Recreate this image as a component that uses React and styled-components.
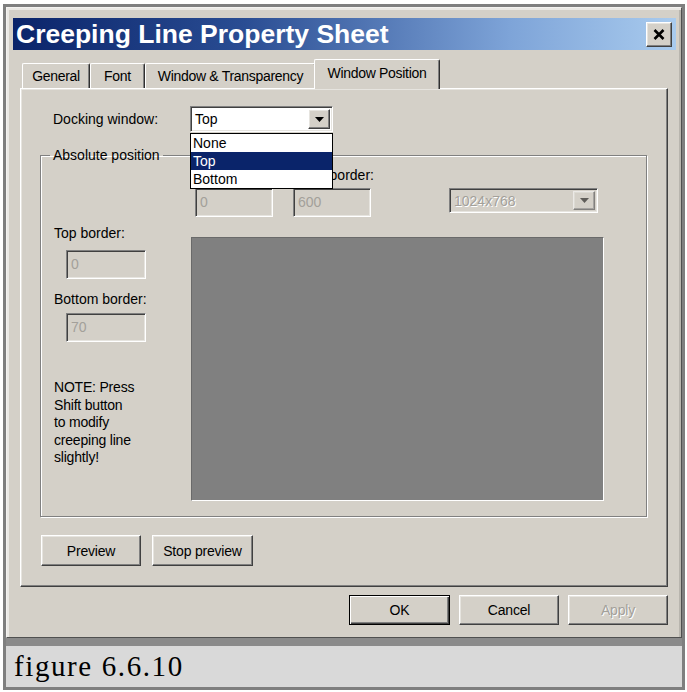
import React from "react";
import styled, { createGlobalStyle } from "styled-components";

const GlobalStyle = createGlobalStyle`
  html, body { margin: 0; padding: 0; background: #ffffff; }
  body { font-family: "Liberation Sans", Arial, sans-serif; color: #000; }
`;

const raised = `
  border-top: 1px solid #ffffff;
  border-left: 1px solid #ffffff;
  border-right: 1px solid #404040;
  border-bottom: 1px solid #404040;
  box-shadow: inset -1px -1px 0 #808080, inset 1px 1px 0 #e6e4df;
`;

const sunken = `
  border-top: 1px solid #808080;
  border-left: 1px solid #808080;
  border-right: 1px solid #ffffff;
  border-bottom: 1px solid #ffffff;
  box-shadow: inset 1px 1px 0 #404040, inset -1px -1px 0 #e6e4df;
`;

const tabs = [
  { label: "General", width: 68 },
  { label: "Font", width: 55 },
  { label: "Window & Transparency", width: 171 },
  { label: "Window Position", width: 126, active: true },
];

const dockOptions = ["None", "Top", "Bottom"];

const noteLines = ["NOTE: Press", "Shift button", "to modify", "creeping line", "slightly!"];

const Arrow = () => (
  <svg width="9" height="5" viewBox="0 0 9 5">
    <path d="M0 0h9L4.5 5z" fill="#000" />
  </svg>
);

const App = () => {
  return (
    <React.Fragment>
      <GlobalStyle />
      <S.frame>
        <S.dialog>
          <S.titleBar>
            <S.titleText>Creeping Line Property Sheet</S.titleText>
            <S.closeButton>
              <svg width="12" height="11" viewBox="0 0 12 11">
                <path d="M1.5 1l9 9M10.5 1l-9 9" stroke="#000" strokeWidth="2.6" />
              </svg>
            </S.closeButton>
          </S.titleBar>

          <S.tabStrip>
            {tabs.map((t) => (
              <S.tab key={t.label} $width={t.width} $active={t.active}>
                {t.label}
              </S.tab>
            ))}
          </S.tabStrip>

          <S.panel>
            <S.dockRow>
              <S.dockLabel>Docking window:</S.dockLabel>
              <S.selectWrap>
                <S.select $width={143}>
                  <S.selectValue>Top</S.selectValue>
                  <S.arrowButton>
                    <Arrow />
                  </S.arrowButton>
                </S.select>
                <S.dropList>
                  {dockOptions.map((o) => (
                    <S.dropItem key={o} $selected={o === "Top"}>
                      {o}
                    </S.dropItem>
                  ))}
                </S.dropList>
              </S.selectWrap>
            </S.dockRow>

            <S.group>
              <S.legend>Absolute position</S.legend>
              <S.groupGrid>
                <div />
                <S.topFields>
                  <S.field $width={78}>
                    <S.label>Left border:</S.label>
                    <S.input $width={78}>0</S.input>
                  </S.field>
                  <S.field $width={78}>
                    <S.label>Right border:</S.label>
                    <S.input $width={78}>600</S.input>
                  </S.field>
                  <S.resSelect $width={149}>
                    <S.selectValue $disabled>1024x768</S.selectValue>
                    <S.arrowButton $disabled>
                      <Arrow />
                    </S.arrowButton>
                  </S.resSelect>
                </S.topFields>

                <S.leftStack>
                  <S.label>Top border:</S.label>
                  <S.stackInput $width={80}>0</S.stackInput>
                  <S.label $gap={12}>Bottom border:</S.label>
                  <S.stackInput $width={80} $gap={6}>70</S.stackInput>
                  <S.note>
                    {noteLines.map((l) => (
                      <div key={l}>{l}</div>
                    ))}
                  </S.note>
                </S.leftStack>
                <S.preview />
              </S.groupGrid>
            </S.group>

            <S.buttonRow>
              <S.button $width={100}>Preview</S.button>
              <S.button $width={101}>Stop preview</S.button>
            </S.buttonRow>
          </S.panel>

          <S.dialogButtons>
            <S.button $width={101} $default>OK</S.button>
            <S.button $width={100}>Cancel</S.button>
            <S.button $width={100} $disabled>Apply</S.button>
          </S.dialogButtons>
        </S.dialog>
        <S.caption>figure 6.6.10</S.caption>
      </S.frame>
    </React.Fragment>
  );
};

const S = {
  frame: styled.div`
    margin: 4px 0 0 3px;
    width: 682px;
    box-sizing: border-box;
    border: 3px solid #7f7f7f;
    background: #ececea;
  `,
  dialog: styled.div`
    background: #d4d0c8;
    padding: 10px 5px 12px 6px;
    border-top: 1px solid #f4f3f1;
    border-left: 1px solid #f4f3f1;
    border-right: 1px solid #505050;
    border-bottom: 1px solid #505050;
    box-shadow: inset 2px 2px 0 #ebe9e5, inset -2px 0 0 #b8b5ae;
  `,
  titleBar: styled.div`
    height: 32px;
    display: flex;
    align-items: center;
    justify-content: space-between;
    padding: 0 4px 0 3px;
    background: linear-gradient(to right, #0a246a 0%, #2a4d93 35%, #7ea4d8 75%, #a9cbee 100%);
  `,
  titleText: styled.span`
    color: #ffffff;
    font-weight: 700;
    font-size: 26.5px;
    line-height: 32px;
    white-space: nowrap;
  `,
  closeButton: styled.div`
    width: 26px;
    height: 25px;
    box-sizing: border-box;
    background: #d4d0c8;
    display: grid;
    place-items: center;
    ${raised}
  `,
  tabStrip: styled.div`
    display: flex;
    align-items: flex-end;
    height: 29px;
    margin: 9px 0 0 7px;
    padding-left: 2px;
  `,
  tab: styled.div`
    width: ${(p) => p.$width}px;
    height: ${(p) => (p.$active ? 30 : 25)}px;
    margin: ${(p) => (p.$active ? "0 -2px -1px -2px" : "0")};
    position: relative;
    z-index: ${(p) => (p.$active ? 2 : 1)};
    box-sizing: border-box;
    display: flex;
    align-items: center;
    justify-content: center;
    padding-bottom: ${(p) => (p.$active ? 3 : 0)}px;
    font-size: 14px;
    letter-spacing: -0.3px;
    white-space: nowrap;
    background: #d4d0c8;
    border-top: 1px solid #ffffff;
    border-left: 1px solid #ffffff;
    border-right: 1px solid #303030;
    border-radius: 2px 2px 0 0;
    box-shadow: inset -1px 0 0 #808080;
  `,
  panel: styled.div`
    margin-left: 7px;
    width: 648px;
    height: 499px;
    box-sizing: border-box;
    padding: 17px 20px 0 19px;
    ${raised}
  `,
  dockRow: styled.div`
    display: flex;
    align-items: center;
    padding-left: 13px;
    height: 26px;
  `,
  dockLabel: styled.div`
    width: 137px;
    font-size: 14px;
  `,
  selectWrap: styled.div`
    position: relative;
  `,
  select: styled.div`
    width: ${(p) => p.$width}px;
    height: 26px;
    box-sizing: border-box;
    display: flex;
    align-items: center;
    justify-content: space-between;
    padding: 2px;
    background: #ffffff;
    ${sunken}
  `,
  resSelect: styled.div`
    width: ${(p) => p.$width}px;
    height: 25px;
    margin: 0 0 4px 58px;
    box-sizing: border-box;
    display: flex;
    align-items: center;
    justify-content: space-between;
    padding: 2px;
    background: #d4d0c8;
    ${sunken}
  `,
  selectValue: styled.span`
    font-size: 14px;
    padding-left: 2px;
    color: ${(p) => (p.$disabled ? "#a3a09a" : "#000")};
    text-shadow: ${(p) => (p.$disabled ? "1px 1px 0 #ffffff" : "none")};
  `,
  arrowButton: styled.div`
    width: 22px;
    height: 100%;
    box-sizing: border-box;
    display: grid;
    place-items: center;
    background: #d4d0c8;
    opacity: ${(p) => (p.$disabled ? 0.55 : 1)};
    ${raised}
  `,
  dropList: styled.div`
    position: absolute;
    top: 100%;
    left: 0;
    z-index: 10;
    width: 143px;
    box-sizing: border-box;
    background: #ffffff;
    border: 1px solid #000000;
    margin-top: 1px;
  `,
  dropItem: styled.div`
    height: 18px;
    line-height: 18px;
    font-size: 14px;
    padding-left: 2px;
    background: ${(p) => (p.$selected ? "#0a246a" : "transparent")};
    color: ${(p) => (p.$selected ? "#ffffff" : "#000000")};
  `,
  group: styled.fieldset`
    margin: 15px 0 0 0;
    padding: 0 6px 15px 13px;
    min-width: 0;
    width: 607px;
    box-sizing: border-box;
    border: 1px solid #808080;
    box-shadow: inset 1px 1px 0 #ffffff, 1px 1px 0 #ffffff;
  `,
  legend: styled.legend`
    padding: 0 3px;
    margin-left: -4px;
    font-size: 14px;
    line-height: 16px;
  `,
  groupGrid: styled.div`
    display: grid;
    grid-template-columns: 137px 1fr;
    row-gap: 8px;
  `,
  topFields: styled.div`
    display: flex;
    align-items: flex-end;
    gap: 20px;
    padding: 4px 0 0 4px;
  `,
  field: styled.div`
    width: ${(p) => p.$width}px;
    display: flex;
    flex-direction: column;
    gap: 5px;
  `,
  label: styled.div`
    font-size: 14px;
    line-height: 16px;
    margin-top: ${(p) => p.$gap || 0}px;
    white-space: nowrap;
  `,
  input: styled.div`
    width: ${(p) => p.$width}px;
    height: 29px;
    box-sizing: border-box;
    padding: 5px 0 0 4px;
    font-size: 14px;
    color: #a3a09a;
    background: #d4d0c8;
    ${sunken}
  `,
  stackInput: styled.div`
    width: ${(p) => p.$width}px;
    height: 29px;
    margin: ${(p) => p.$gap || 9}px 0 0 12px;
    box-sizing: border-box;
    padding: 5px 0 0 4px;
    font-size: 14px;
    color: #a3a09a;
    background: #d4d0c8;
    ${sunken}
  `,
  leftStack: styled.div`
    display: flex;
    flex-direction: column;
    align-items: flex-start;
  `,
  note: styled.div`
    margin-top: 37px;
    font-size: 14px;
    line-height: 17.5px;
    letter-spacing: -0.2px;
  `,
  preview: styled.div`
    margin-top: 12px;
    width: 413px;
    height: 264px;
    box-sizing: border-box;
    background: #808080;
    border-top: 1px solid #6a6a6a;
    border-left: 1px solid #6a6a6a;
    border-right: 1px solid #ffffff;
    border-bottom: 1px solid #ffffff;
  `,
  buttonRow: styled.div`
    display: flex;
    gap: 11px;
    margin: 18px 0 0 1px;
  `,
  button: styled.div`
    width: ${(p) => p.$width}px;
    height: ${(p) => (p.$default ? 30 : 31)}px;
    box-sizing: border-box;
    display: flex;
    align-items: center;
    justify-content: center;
    font-size: 14px;
    letter-spacing: -0.2px;
    background: #d4d0c8;
    color: ${(p) => (p.$disabled ? "#a3a09a" : "#000")};
    text-shadow: ${(p) => (p.$disabled ? "1px 1px 0 #ffffff" : "none")};
    ${raised}
    ${(p) =>
      p.$default
        ? `border: 1px solid #000;
           box-shadow: inset 1px 1px 0 #ffffff, inset -1px -1px 0 #404040, inset -2px -2px 0 #808080;`
        : ""}
  `,
  dialogButtons: styled.div`
    display: flex;
    justify-content: flex-end;
    gap: 9px;
    margin-top: 8px;
    padding-right: 8px;
    height: 30px;
    align-items: flex-start;
    & > div {
      height: 30px;
    }
  `,
  caption: styled.div`
    height: 41px;
    border-top: 8px solid #8a8a8a;
    background: #d9d9d9;
    padding-left: 8px;
    font-family: "Liberation Serif", "Times New Roman", serif;
    font-size: 29px;
    line-height: 41px;
    letter-spacing: 1.6px;
  `,
};

export default App;
